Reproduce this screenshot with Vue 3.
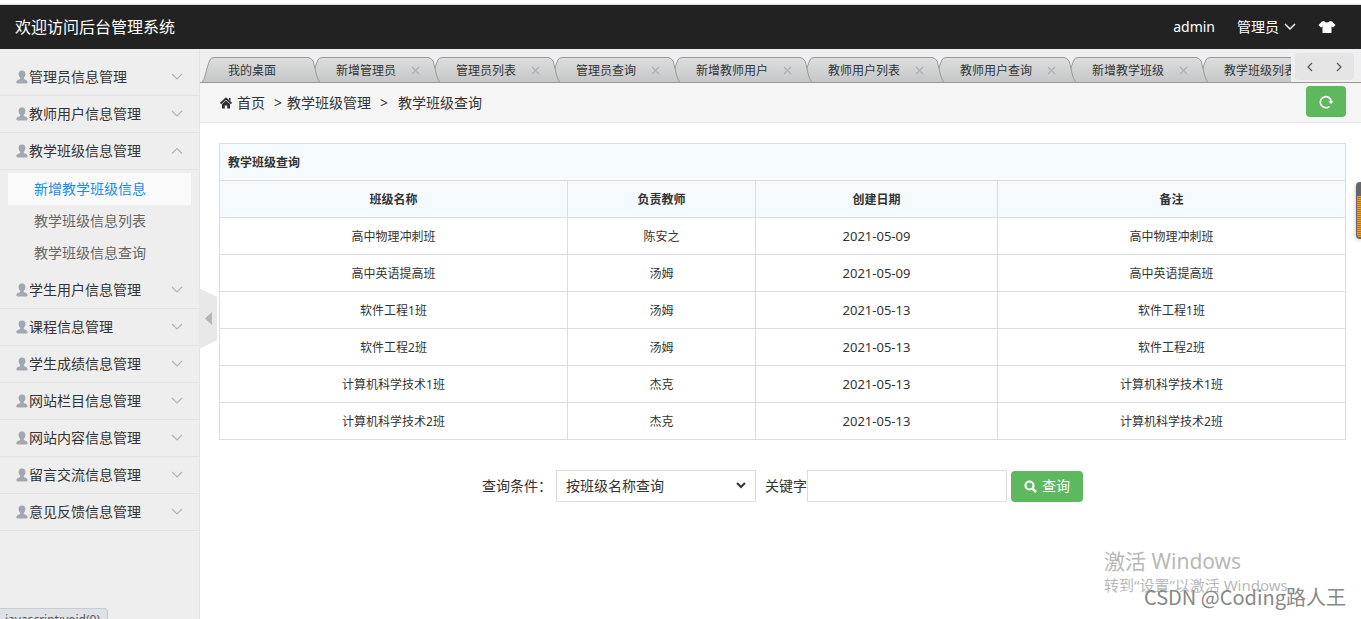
<script setup>
import { ref } from 'vue'

const menus = [
  { name: '管理员信息管理' },
  { name: '教师用户信息管理' },
  { name: '教学班级信息管理', open: true, children: ['新增教学班级信息', '教学班级信息列表', '教学班级信息查询'] },
  { name: '学生用户信息管理' },
  { name: '课程信息管理' },
  { name: '学生成绩信息管理' },
  { name: '网站栏目信息管理' },
  { name: '网站内容信息管理' },
  { name: '留言交流信息管理' },
  { name: '意见反馈信息管理' }
]

const tabs = ['我的桌面', '新增管理员', '管理员列表', '管理员查询', '新增教师用户', '教师用户列表', '教师用户查询', '新增教学班级', '教学班级列表']
  .map((name, i) => ({ name, width: name.length * 12 + 60, closable: i > 0 }))

const tabEdge = (w) => `M0.5 25.5 C4 24 5 11 9 3 Q10 0.5 13 0.5 H${w - 1} Q${w + 2} 0.5 ${w + 4} 4 C${w + 6} 9 ${w + 7} 21 ${w + 11} 25.5`

const columns = ['班级名称', '负责教师', '创建日期', '备注']
const rows = [
  ['高中物理冲刺班', '陈安之', '2021-05-09', '高中物理冲刺班'],
  ['高中英语提高班', '汤姆', '2021-05-09', '高中英语提高班'],
  ['软件工程1班', '汤姆', '2021-05-13', '软件工程1班'],
  ['软件工程2班', '汤姆', '2021-05-13', '软件工程2班'],
  ['计算机科学技术1班', '杰克', '2021-05-13', '计算机科学技术1班'],
  ['计算机科学技术2班', '杰克', '2021-05-13', '计算机科学技术2班']
]

const field = ref('name')
const keyword = ref('')
</script>

<template>
  <div class="page">
    <header class="topbar">
      <h1>欢迎访问后台管理系统</h1>
      <div class="account">
        <span>admin</span>
        <button class="role" type="button">
          管理员
          <svg width="12" height="8" viewBox="0 0 12 8"><path d="M1 1l5 5 5-5" fill="none" stroke="#fff" stroke-width="1.5" /></svg>
        </button>
        <button class="skin" type="button" aria-label="换肤">
          <svg width="18" height="14" viewBox="0 0 18 14"><path d="M6 1Q9 4 12 1L14 1.500L17.500 5L15 7.500L13.500 6.500V13H4.500V6.500L3 7.500L0.500 5L4 1.500Z" fill="#fff" /></svg>
        </button>
      </div>
    </header>

    <div class="body">
      <nav class="sidebar">
        <section v-for="m in menus" :key="m.name">
          <button class="menu" type="button">
            <svg class="user" width="12" height="14" viewBox="0 0 12 14"><path d="M6 0.500C8.800 0.500 9.700 2.200 9.400 4.500C9.200 6.300 8.500 7.200 7.800 7.900V9C9 9.700 11.700 10 11.700 12.500Q11.500 13.500 10 13.500H2Q0.500 13.500 0.300 12.500C0.300 10 3 9.700 4.200 9V7.900C3.500 7.200 2.800 6.300 2.600 4.500C2.300 2.200 3.200 0.500 6 0.500Z" fill="#a2a8b2" /></svg>
            <span>{{ m.name }}</span>
            <svg class="arrow" width="12" height="8" viewBox="0 0 12 8"><path :d="m.open ? 'M1 6.500l5-5 5 5' : 'M1 1l5 5 5-5'" fill="none" stroke="#b4b4b4" stroke-width="1.200" /></svg>
          </button>
          <ul v-if="m.open" class="submenu">
            <li v-for="(c, i) in m.children" :key="c"><a href="#" :class="{ current: i === 0 }">{{ c }}</a></li>
          </ul>
        </section>
        <button class="collapse" type="button" aria-label="收起菜单">
          <svg width="18" height="62" viewBox="0 0 18 62"><path d="M0 0L18 9V52L0 61Z" fill="#e8e8e8" /><path d="M6 30.500L13 24V37Z" fill="#b5b5b5" /></svg>
        </button>
      </nav>

      <main>
        <div class="tabbar">
          <ul class="tabs">
            <li v-for="(t, i) in tabs" :key="t.name" :style="{ width: t.width + 'px', zIndex: tabs.length - i }">
              <svg class="shape" :width="t.width + 12" height="26">
                <defs>
                  <linearGradient :id="'tab' + i" x1="0" y1="0" x2="0" y2="1">
                    <stop offset="0" stop-color="#dcdedd" /><stop offset="1" stop-color="#c6c6c8" />
                  </linearGradient>
                </defs>
                <path :d="tabEdge(t.width)" :fill="`url(#tab${i})`" stroke="#999" />
              </svg>
              <a href="#">{{ t.name }}</a>
              <button v-if="t.closable" type="button" aria-label="关闭">
                <svg width="9" height="9" viewBox="0 0 9 9"><path d="M1 1l7 7M8 1l-7 7" stroke="#abb2b8" stroke-width="1.200" /></svg>
              </button>
            </li>
          </ul>
          <div class="pager">
            <button type="button" aria-label="向左"><svg width="6" height="10" viewBox="0 0 6 10"><path d="M5 1L1 5l4 4" fill="none" stroke="#555" stroke-width="1.200" /></svg></button>
            <button type="button" aria-label="向右"><svg width="6" height="10" viewBox="0 0 6 10"><path d="M1 1l4 4-4 4" fill="none" stroke="#555" stroke-width="1.200" /></svg></button>
          </div>
        </div>

        <div class="crumbs">
          <svg width="12" height="12" viewBox="0 0 12 12"><path d="M0.500 6.500L6 1.500L11.500 6.500" fill="none" stroke="#333" stroke-width="1.800" /><path d="M2 7L6 3.500L10 7V11.500H7.200V8.500H4.800V11.500H2ZM9 1h1.500v3L9 2.800Z" fill="#333" /></svg>
          <a href="#">首页</a>
          <span class="sep">&gt;</span>
          <span>教学班级管理</span>
          <span class="sep wide">&gt;</span>
          <span>教学班级查询</span>
          <button class="refresh" type="button" aria-label="刷新">
            <svg width="14" height="14" viewBox="0 0 14 14"><path d="M10.500 11.300A5.500 5.500 0 1 1 12.300 6.500" fill="none" stroke="#fff" stroke-width="1.600" /><path d="M9.500 6H14L13 8.500H11Z" fill="#fff" /></svg>
          </button>
        </div>

        <div class="content">
          <table>
            <colgroup><col class="c1"><col class="c2"><col class="c3"><col class="c4"></colgroup>
            <thead>
              <tr><th class="caption" colspan="4">教学班级查询</th></tr>
              <tr><th v-for="c in columns" :key="c">{{ c }}</th></tr>
            </thead>
            <tbody>
              <tr v-for="r in rows" :key="r[0]">
                <td v-for="(v, i) in r" :key="i" :class="{ date: i === 2 }">{{ v }}</td>
              </tr>
            </tbody>
          </table>

          <form class="search" @submit.prevent>
            <label for="field">查询条件：</label>
            <div class="select">
              <select id="field" v-model="field"><option value="name">按班级名称查询</option></select>
              <svg width="10" height="7" viewBox="0 0 10 7"><path d="M1 1l4 4 4-4" fill="none" stroke="#333" stroke-width="2" /></svg>
            </div>
            <label class="keyword" for="keyword">关键字</label>
            <input id="keyword" v-model="keyword" type="text">
            <button type="submit">
              <svg width="13" height="13" viewBox="0 0 13 13"><circle cx="5.500" cy="5.500" r="4" fill="none" stroke="#fff" stroke-width="2.200" /><path d="M8.300 8.300L12 12" stroke="#fff" stroke-width="2.600" /></svg>
              查询
            </button>
          </form>
        </div>
      </main>
    </div>

    <div class="activate"><p>激活 Windows</p><p class="small">转到“设置”以激活 Windows。</p></div>
    <div class="author">CSDN @Coding路人王</div>
    <div class="meter"></div>
    <div class="status">javascript:void(0)</div>
  </div>
</template>

<style>
body {
  margin: 0;
}
</style>

<style scoped>
.page {
  position: relative;
  display: flex;
  flex-direction: column;
  box-sizing: border-box;
  height: 100vh;
  overflow: hidden;
  padding-top: 4px;
  background: #fff;
  color: #333;
  font: 14px/20px "Noto Sans", "Noto Sans CJK SC", sans-serif;
}
button, input, select {
  box-sizing: border-box;
  margin: 0;
  padding: 0;
  border: 0;
  background: none;
  color: inherit;
  font: inherit;
}
a {
  color: inherit;
  text-decoration: none;
}
ul, p, h1 {
  margin: 0;
  padding: 0;
  list-style: none;
}
svg {
  display: block;
  flex: none;
}
.topbar {
  display: flex;
  align-items: center;
  justify-content: space-between;
  height: 44px;
  flex: none;
  padding: 0 25px 0 15px;
  border-top: 1px solid #ddd;
  background: #222;
  color: #fff;
}
h1 {
  font-size: 16px;
  font-weight: 400;
}
.account, .role {
  display: flex;
  align-items: center;
}
.role {
  gap: 5px;
  margin: 0 22px;
}
.body {
  display: flex;
  flex: 1;
  min-height: 0;
}
.sidebar {
  position: relative;
  z-index: 1;
  box-sizing: border-box;
  width: 200px;
  flex: none;
  padding-top: 10px;
  border-right: 1px solid #e3e3e3;
  background: #eee;
}
.menu {
  display: flex;
  align-items: center;
  width: 100%;
  height: 37px;
  padding: 0 16px;
  border-bottom: 1px solid #e3e3e3;
}
.user {
  margin-right: 1px;
}
.arrow {
  margin-left: auto;
}
.submenu {
  padding: 3px 8px;
}
.submenu a {
  display: block;
  padding-left: 26px;
  line-height: 32px;
  color: #666;
}
.submenu .current {
  background: #fafafa;
  color: #148cf1;
}
.collapse {
  position: absolute;
  top: 239px;
  left: 100%;
}
main {
  display: flex;
  flex-direction: column;
  flex: 1;
  min-width: 0;
}
.tabbar {
  display: flex;
  align-items: flex-start;
  box-sizing: border-box;
  height: 34px;
  border-bottom: 1px solid #999;
  background: #efeff1;
}
.tabs {
  display: flex;
  flex: 1;
  min-width: 0;
  overflow: hidden;
  height: 33px;
  box-sizing: border-box;
  padding: 8px 0 0 4px;
}
.tabs li {
  position: relative;
  display: flex;
  flex: none;
  align-items: center;
  box-sizing: border-box;
  height: 26px;
  padding-left: 24px;
  font-size: 12px;
  line-height: 22px;
}
.shape {
  position: absolute;
  top: 0;
  left: -3px;
}
.tabs a, .tabs button {
  position: relative;
}
.tabs a {
  padding-top: 2px;
}
.tabs button {
  margin-left: 15px;
}
.pager {
  display: flex;
  align-items: center;
  justify-content: space-around;
  width: 59px;
  height: 27px;
  margin: 4px 7px 0 4px;
  border-radius: 4px;
  background: #e5e5e5;
}
.crumbs {
  display: flex;
  align-items: center;
  box-sizing: border-box;
  height: 40px;
  padding: 0 15px 0 20px;
  border-bottom: 1px solid #e5e5e5;
  background: #f5f5f5;
}
.crumbs a {
  margin-left: 5px;
}
.sep {
  width: 8px;
  margin: 0 5px 0 9px;
}
.wide {
  margin: 0 10px 0 9px;
}
.refresh {
  display: flex;
  align-items: center;
  justify-content: center;
  width: 40px;
  height: 31px;
  margin: 0 0 2px auto;
  border-radius: 4px;
  background: #5eb95e;
}
.content {
  padding: 20px 15px 0 19px;
}
table {
  width: 100%;
  border-collapse: collapse;
  table-layout: fixed;
  font-size: 12px;
}
.c1 {
  width: 30.9%;
}
.c2 {
  width: 16.7%;
}
.c3 {
  width: 21.5%;
}
.c4 {
  width: 30.9%;
}
th, td {
  height: 34px;
  padding: 2px 8px 0;
  border: 1px solid #ddd;
  text-align: center;
}
th {
  background: #f5fafe;
}
.caption {
  text-align: left;
}
.date {
  height: 36px;
  padding-top: 0;
  font-size: 13px;
}
.search {
  display: flex;
  align-items: center;
  justify-content: center;
  margin-top: 30px;
}
.search > label:first-child {
  width: 74px;
}
.select {
  position: relative;
}
select, input {
  display: block;
  width: 200px;
  height: 32px;
  padding: 0 9px;
  border: 1px solid #ddd;
  border-radius: 0;
  background: #fff;
  appearance: none;
}
.select svg {
  position: absolute;
  top: 12px;
  right: 10px;
  pointer-events: none;
}
.keyword {
  margin-left: 9px;
}
.search button {
  display: flex;
  align-items: center;
  justify-content: center;
  gap: 5px;
  width: 72px;
  height: 31px;
  margin-left: 4px;
  border-radius: 4px;
  background: #5eb95e;
  color: #fff;
}
.activate {
  position: absolute;
  right: 57px;
  bottom: 22px;
  width: 200px;
  color: #b8b8b8;
  font-size: 21px;
  line-height: 24px;
  white-space: nowrap;
}
.activate .small {
  font-size: 15px;
}
.author {
  position: absolute;
  right: 15px;
  bottom: 10px;
  color: #888;
  font-family: "Noto Sans CJK SC", sans-serif;
  font-size: 20px;
  line-height: 24px;
}
.meter {
  position: absolute;
  top: 182px;
  right: 0;
  box-sizing: border-box;
  width: 5px;
  height: 57px;
  border: solid #666;
  border-width: 14px 0 2px 1px;
  border-radius: 4px 0 0 4px;
  background: repeating-linear-gradient(#ff9c00 0 1px, #a87835 1px 2px);
  box-shadow: 0 1px 4px #bbb;
}
.status {
  position: absolute;
  z-index: 2;
  left: 0;
  bottom: -12px;
  box-sizing: border-box;
  height: 23px;
  padding: 0 7px 0 5px;
  border: 1px solid #c8cbd0;
  border-left: 0;
  border-radius: 0 4px 0 0;
  background: #dee1e6;
  color: #555;
  font-size: 12px;
  line-height: 21px;
}
</style>
